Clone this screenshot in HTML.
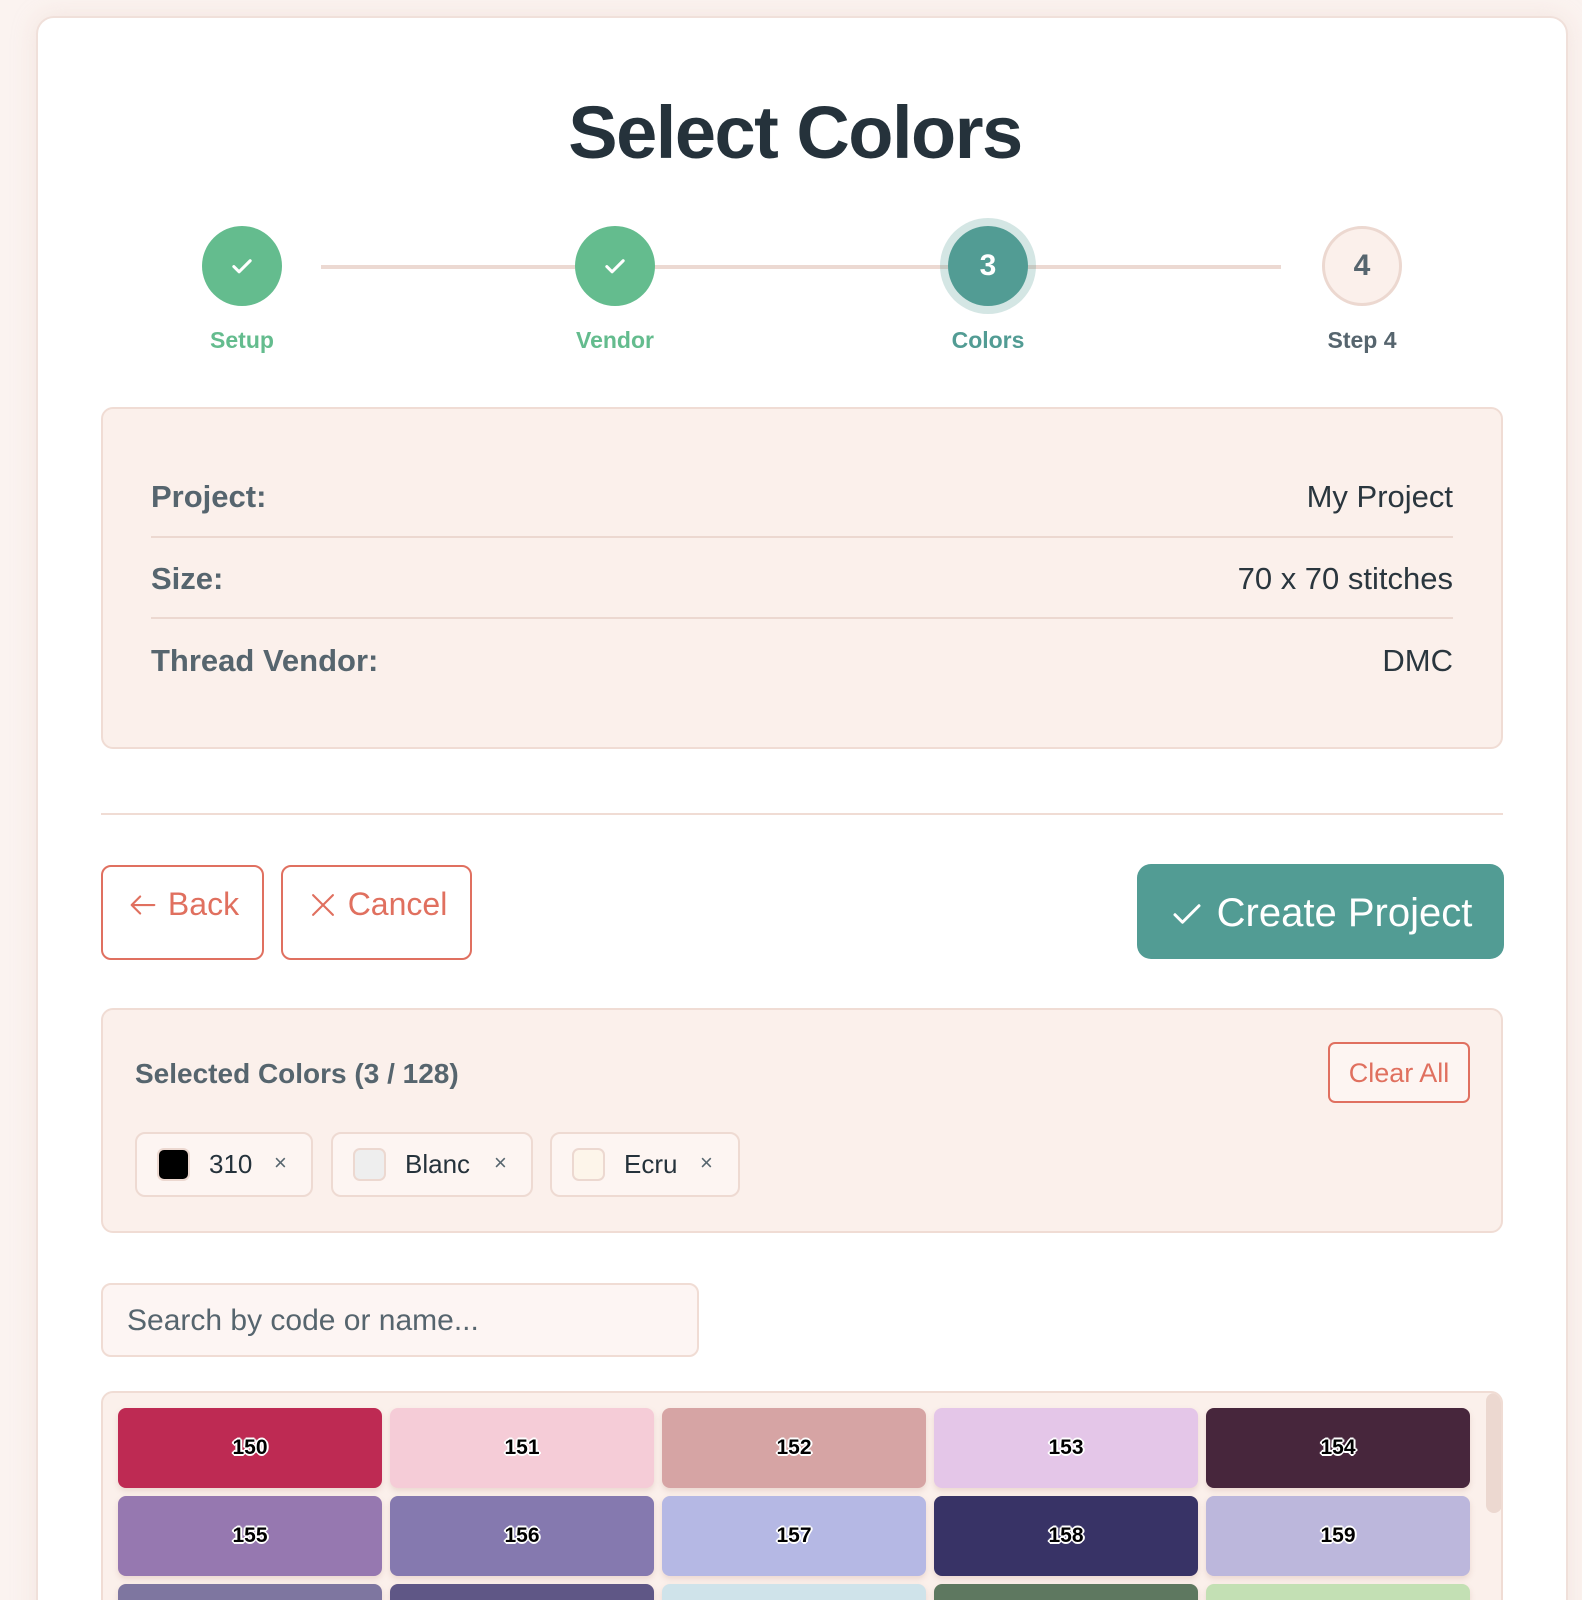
<!DOCTYPE html>
<html><head><meta charset="utf-8"><style>
*{box-sizing:border-box;margin:0;padding:0}
html,body{width:1582px;height:1600px;overflow:hidden}
body{background:#fbf3f0;font-family:"Liberation Sans",sans-serif;position:relative}
.abs{position:absolute}
.card{left:36px;top:16px;width:1532px;height:1620px;background:#fff;border:2px solid #f0e0da;border-radius:18px;box-shadow:0 0 24px rgba(230,200,190,.35)}
h1{position:absolute;left:0;width:1590px;top:90px;text-align:center;font-size:74px;font-weight:bold;color:#25323b;letter-spacing:-1.5px}
.line{left:321px;top:265px;width:960px;height:4px;background:#ecd9d2}
.circ{width:80px;height:80px;border-radius:50%;display:flex;align-items:center;justify-content:center;font-weight:bold;font-size:30px}
.lbl{width:200px;text-align:center;font-size:23px;font-weight:bold;top:327px}
.info{left:101px;top:407px;width:1402px;height:342px;background:#fbf0eb;border:2px solid #f0dcd4;border-radius:12px}
.row{position:absolute;left:151px;width:1302px;font-size:31px;display:flex;justify-content:space-between}
.row b{color:#56656e}.row span{color:#2a363e}
.sep{left:151px;width:1302px;height:2px;background:#ecd8d0}
.btn{border:2px solid #e07060;border-radius:10px;color:#e0705f;font-size:32px;display:flex;align-items:flex-start;padding-top:19px;justify-content:center;background:#fff}
.sel{left:101px;top:1008px;width:1402px;height:225px;background:#fbf0eb;border:2px solid #f0dcd4;border-radius:12px}
.chip{top:1132px;height:65px;border:2px solid #eedad2;border-radius:10px;background:#fdf5f2;font-size:26px;color:#25323b}
.chip .sw{position:absolute;left:20px;top:14px;width:33px;height:33px;border-radius:7px;border:2px solid #ecd8d0}
.chip .t{position:absolute;left:72px;top:15px}
.chip .x{position:absolute;top:16px;font-size:22px;color:#56656e}
.search{left:101px;top:1283px;width:598px;height:74px;border:2px solid #f0dcd4;border-radius:10px;background:#fdf5f3;font-size:30px;color:#56656e;padding:19px 0 0 24px}
.grid{left:101px;top:1391px;width:1402px;height:240px;background:#fbf0eb;border:2px solid #f0dcd4;border-radius:12px;overflow:hidden}
.s{position:absolute;width:264px;height:80px;border-radius:8px;display:flex;align-items:center;justify-content:center;font-weight:bold;font-size:21px;color:#000;text-shadow:-2px 0 #fff,2px 0 #fff,0 -2px #fff,0 2px #fff,-1px -1px #fff,1px 1px #fff,-1px 1px #fff,1px -1px #fff;box-shadow:0 3px 6px rgba(200,160,150,.3)}
</style></head><body>
<div class="abs card"></div>
<h1>Select Colors</h1>
<div class="abs line"></div>
<div class="abs circ" style="left:202px;top:226px;background:#64bc8e"><svg width="28" height="28" viewBox="0 0 24 24"><path d="M5 12.5l4.5 4.5L19 7.5" fill="none" stroke="#fff" stroke-width="2.6" stroke-linecap="round" stroke-linejoin="round"/></svg></div>
<div class="abs circ" style="left:575px;top:226px;background:#64bc8e"><svg width="28" height="28" viewBox="0 0 24 24"><path d="M5 12.5l4.5 4.5L19 7.5" fill="none" stroke="#fff" stroke-width="2.6" stroke-linecap="round" stroke-linejoin="round"/></svg></div>
<div class="abs circ" style="left:940px;top:218px;width:96px;height:96px;background:rgba(82,156,148,.25)"></div>
<div class="abs circ" style="left:948px;top:226px;background:#529c94;color:#fff">3</div>
<div class="abs circ" style="left:1322px;top:226px;background:#fbf0eb;border:3px solid #ecd8d0;color:#56656e">4</div>
<div class="abs lbl" style="left:142px;color:#64bc8e">Setup</div>
<div class="abs lbl" style="left:515px;color:#64bc8e">Vendor</div>
<div class="abs lbl" style="left:888px;color:#529c94">Colors</div>
<div class="abs lbl" style="left:1262px;color:#56656e">Step 4</div>

<div class="abs info"></div>
<div class="row" style="top:479px"><b>Project:</b><span>My Project</span></div>
<div class="abs sep" style="top:536px"></div>
<div class="row" style="top:561px"><b>Size:</b><span>70 x 70 stitches</span></div>
<div class="abs sep" style="top:617px"></div>
<div class="row" style="top:643px"><b>Thread Vendor:</b><span>DMC</span></div>

<div class="abs" style="left:101px;top:813px;width:1402px;height:2px;background:#f0dcd4"></div>

<div class="abs btn" style="left:101px;top:865px;width:163px;height:95px"><svg width="34" height="34" viewBox="0 0 24 24" style="margin:2px 8px 0 0"><path d="M20 12H4M10 6l-6 6 6 6" fill="none" stroke="#e0705f" stroke-width="1.5" stroke-linecap="round" stroke-linejoin="round"/></svg>Back</div>
<div class="abs btn" style="left:281px;top:865px;width:191px;height:95px"><svg width="34" height="34" viewBox="0 0 24 24" style="margin:2px 8px 0 0"><path d="M5 5l14 14M19 5L5 19" fill="none" stroke="#e0705f" stroke-width="1.5" stroke-linecap="round"/></svg>Cancel</div>
<div class="abs" style="left:1137px;top:864px;width:367px;height:95px;background:#529c94;border-radius:14px;color:#fff;font-size:40px;display:flex;align-items:center;justify-content:center;padding-top:4px"><svg width="36" height="36" viewBox="0 0 24 24" style="margin-right:12px"><path d="M4 12.5l5 5L20 6.5" fill="none" stroke="#fff" stroke-width="2" stroke-linecap="round" stroke-linejoin="round"/></svg>Create Project</div>

<div class="abs sel"></div>
<div class="abs" style="left:135px;top:1058px;font-size:28px;font-weight:bold;color:#56656e">Selected Colors (3 / 128)</div>
<div class="abs" style="left:1328px;top:1042px;width:142px;height:61px;border:2px solid #e07060;border-radius:7px;color:#e0705f;font-size:27px;text-align:center;padding-top:14px;background:#fdf5f2">Clear All</div>
<div class="abs chip" style="left:135px;width:178px"><div class="sw" style="background:#000"></div><div class="t">310</div><div class="x" style="left:137px">×</div></div>
<div class="abs chip" style="left:331px;width:202px"><div class="sw" style="background:#eeeeee"></div><div class="t">Blanc</div><div class="x" style="left:161px">×</div></div>
<div class="abs chip" style="left:550px;width:190px"><div class="sw" style="background:#fdf5ea"></div><div class="t">Ecru</div><div class="x" style="left:148px">×</div></div>

<div class="abs search">Search by code or name...</div>

<div class="abs grid">
<div class="s" style="left:15px;top:15px;background:#be2a53">150</div>
<div class="s" style="left:287px;top:15px;background:#f5ccd7">151</div>
<div class="s" style="left:559px;top:15px;background:#d6a4a4">152</div>
<div class="s" style="left:831px;top:15px;background:#e4c6e8">153</div>
<div class="s" style="left:1103px;top:15px;background:#47263c">154</div>
<div class="s" style="left:15px;top:103px;background:#9678b0">155</div>
<div class="s" style="left:287px;top:103px;background:#8579af">156</div>
<div class="s" style="left:559px;top:103px;background:#b5b8e4">157</div>
<div class="s" style="left:831px;top:103px;background:#383366">158</div>
<div class="s" style="left:1103px;top:103px;background:#bcb7dc">159</div>
<div class="s" style="left:15px;top:191px;background:#7e76a0"></div>
<div class="s" style="left:287px;top:191px;background:#5f5786"></div>
<div class="s" style="left:559px;top:191px;background:#cfe3ea"></div>
<div class="s" style="left:831px;top:191px;background:#5e7860"></div>
<div class="s" style="left:1103px;top:191px;background:#c3e0b4"></div>
<div class="abs" style="left:1383px;top:0;width:16px;height:120px;background:#ecd8d0;border-radius:8px"></div>
</div>
</body></html>
